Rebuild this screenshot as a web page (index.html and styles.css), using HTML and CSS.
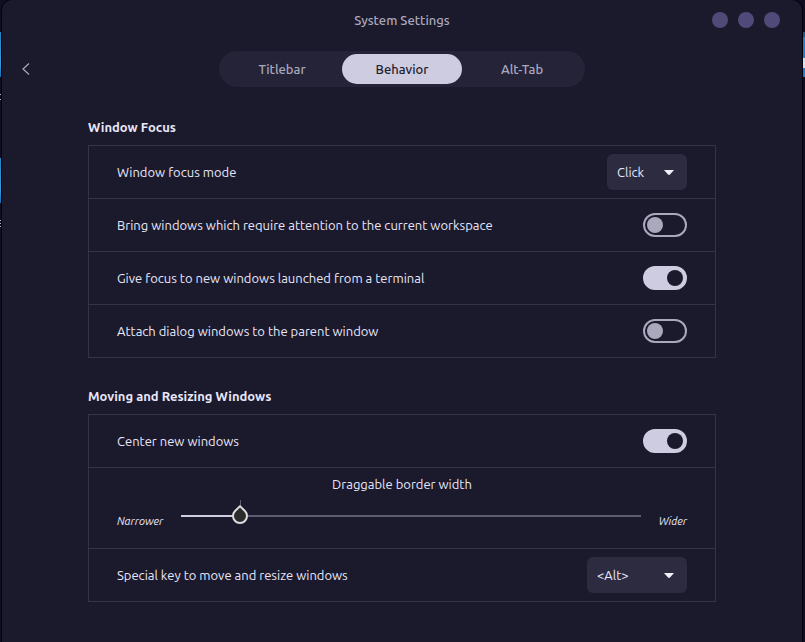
FILE: index.html
```html
<!DOCTYPE html>
<html lang="en">
<head>
<meta charset="utf-8">
<title>System Settings</title>
<link rel="stylesheet" href="styles.css">
</head>
<body>
<div class="window">
  <header class="titlebar">
    <h1>System Settings</h1>
    <div class="window-buttons">
      <button type="button" aria-label="Minimize"></button>
      <button type="button" aria-label="Maximize"></button>
      <button type="button" aria-label="Close"></button>
    </div>
  </header>
  <nav class="toolbar">
    <button type="button" class="back" aria-label="Back">
      <svg width="8" height="12" viewBox="0 0 8 12"><path d="M7 .5 1 6 7 11.5" fill="none" stroke="currentColor" stroke-width="1.2"/></svg>
    </button>
    <div class="tabs">
      <button type="button">Titlebar</button>
      <button type="button" class="active">Behavior</button>
      <button type="button">Alt-Tab</button>
    </div>
  </nav>
  <main>
    <section>
      <h2>Window Focus</h2>
      <div class="group">
        <div class="row">
          <label for="focus-mode">Window focus mode</label>
          <div class="dropdown">
            <select id="focus-mode"><option>Click</option><option>Sloppy</option><option>Mouse</option></select>
            <svg width="10" height="5" viewBox="0 0 10 5"><path d="M0 0h10L6 4.6Q5 5.3 4 4.6z" fill="currentColor"/></svg>
          </div>
        </div>
        <div class="row">
          <label for="attention">Bring windows which require attention to the current workspace</label>
          <input type="checkbox" class="switch" id="attention">
        </div>
        <div class="row">
          <label for="terminal">Give focus to new windows launched from a terminal</label>
          <input type="checkbox" class="switch" id="terminal" checked>
        </div>
        <div class="row">
          <label for="attach">Attach dialog windows to the parent window</label>
          <input type="checkbox" class="switch" id="attach">
        </div>
      </div>
    </section>
    <section>
      <h2>Moving and Resizing Windows</h2>
      <div class="group">
        <div class="row">
          <label for="center">Center new windows</label>
          <input type="checkbox" class="switch" id="center" checked>
        </div>
        <div class="row range-row">
          <label for="border-width">Draggable border width</label>
          <div class="range">
            <span class="range-end">Narrower</span>
            <div class="scale" style="--fill: 12.9%">
              <input type="range" id="border-width" min="2" max="64" value="10">
            </div>
            <span class="range-end">Wider</span>
          </div>
        </div>
        <div class="row">
          <label for="special-key">Special key to move and resize windows</label>
          <div class="dropdown wide">
            <select id="special-key"><option>&lt;Alt&gt;</option><option>&lt;Super&gt;</option><option>Disabled</option></select>
            <svg width="10" height="5" viewBox="0 0 10 5"><path d="M0 0h10L6 4.6Q5 5.3 4 4.6z" fill="currentColor"/></svg>
          </div>
        </div>
      </div>
    </section>
  </main>
</div>
</body>
</html>
```
FILE: styles.css
```css
:root {
  --bg: #1b192c;
  --line: #35334a;
  --text: #e8e7fa;
  --muted: #aaa8bd;
  --accent: #cecce1;
}

* { box-sizing: border-box; }

body {
  margin: 0;
  padding: 0 3px 0 2px;
  background:
    linear-gradient(#2483c6, #3a9be0 70%, #1670b8) 0 32px / 1px 45px no-repeat,
    linear-gradient(#2483c6, #3a9be0 70%, #1670b8) 0 158px / 1px 45px no-repeat,
    linear-gradient(#b9b8c6, #b9b8c6) 0 94px / 1px 1px no-repeat,
    linear-gradient(#b9b8c6, #b9b8c6) 0 99px / 1px 1px no-repeat,
    linear-gradient(#b9b8c6, #b9b8c6) 0 220px / 1px 1px no-repeat,
    linear-gradient(#b9b8c6, #b9b8c6) 0 223px / 1px 1px no-repeat,
    linear-gradient(#b9b8c6, #b9b8c6) 0 226px / 1px 1px no-repeat,
    linear-gradient(#d5e3ec, #d5e3ec) 100% 58px / 2px 10px no-repeat,
    linear-gradient(#175a8e 5px, #2080c8 5px) 100% 32px / 2px 45px no-repeat,
    #100e20;
  color: var(--text);
  font: 13px/20px "Ubuntu", "Noto Sans", sans-serif;
}

button, select, input { margin: 0; font: inherit; }

button {
  border: 0;
  padding: 0;
  background: none;
  color: var(--muted);
}

.window {
  min-height: 100vh;
  border-radius: 10px 10px 0 0;
  background: var(--bg);
  box-shadow: 0 0 0 1px #04030d;
}

.titlebar {
  display: grid;
  grid-template-columns: 1fr auto 1fr;
  align-items: center;
  height: 40px;
  padding: 0 22px;
}

.titlebar h1 {
  grid-column: 2;
  margin: 0;
  color: var(--muted);
  font-size: 13px;
  font-weight: 500;
}

.window-buttons {
  display: flex;
  justify-content: flex-end;
  gap: 10px;
}

.window-buttons button {
  width: 16px;
  height: 16px;
  border-radius: 50%;
  background: #504a78;
}

.toolbar {
  display: grid;
  grid-template-columns: 1fr auto 1fr;
  align-items: center;
  padding: 11px 12px 0;
}

.back {
  display: flex;
  align-items: center;
  justify-content: center;
  width: 24px;
  height: 24px;
}

.tabs {
  display: flex;
  padding: 3px;
  border-radius: 18px;
  background: #252338;
}

.tabs button {
  width: 120px;
  height: 30px;
  border-radius: 15px;
  font-weight: 500;
}

.tabs .active {
  background: var(--accent);
  color: #1f1d30;
}

main {
  display: flex;
  flex-direction: column;
  gap: 28px;
  padding: 30px 86px 40px;
}

h2 {
  margin: 0 0 8px;
  font-size: 13px;
  font-weight: 700;
}

.group { border: 1px solid var(--line); }

.row {
  display: flex;
  align-items: center;
  justify-content: space-between;
  min-height: 52px;
  padding: 0 28px;
}

.row + .row {
  min-height: 53px;
  border-top: 1px solid var(--line);
}

.dropdown {
  position: relative;
  width: 80px;
  height: 36px;
}

.dropdown.wide { width: 100px; }

.dropdown select {
  appearance: none;
  width: 100%;
  height: 100%;
  padding: 0 28px 0 10px;
  border: 0;
  border-radius: 6px;
  background: #2d2b40;
  color: var(--text);
}

.dropdown svg {
  position: absolute;
  top: 16px;
  right: 13px;
  color: #f0effc;
  pointer-events: none;
}

.switch {
  appearance: none;
  flex: none;
  display: flex;
  align-items: center;
  width: 44px;
  height: 24px;
  padding: 0 2px;
  border: 2px solid var(--muted);
  border-radius: 12px;
}

.switch::before {
  content: "";
  width: 16px;
  height: 16px;
  border-radius: 50%;
  background: var(--muted);
}

.switch:checked {
  justify-content: flex-end;
  border-color: var(--accent);
  background: var(--accent);
}

.switch:checked::before { background: var(--bg); }

.range-row {
  flex-direction: column;
  justify-content: flex-start;
  padding-top: 6px;
  padding-bottom: 16px;
}

.range {
  display: flex;
  align-items: flex-end;
  gap: 18px;
  width: 100%;
  height: 38px;
}

.range-end {
  font-size: 11px;
  font-style: italic;
  line-height: 16px;
  padding-bottom: 3px;
}

.scale {
  flex: 1;
  height: 32px;
  background:
    linear-gradient(var(--accent), var(--accent)) 0 15px / var(--fill) 2px no-repeat,
    linear-gradient(#5f5d70, #5f5d70) 0 15px / 100% 2px no-repeat,
    linear-gradient(#5f5d70, #5f5d70) var(--fill) 0 / 1px 8px no-repeat;
}

.scale input {
  appearance: none;
  display: block;
  width: calc(100% + 16px);
  height: 32px;
  margin: 0 -8px;
  background: none;
}

.scale input::-webkit-slider-thumb {
  appearance: none;
  width: 16px;
  height: 16px;
  border: 2px solid #deddde;
  border-radius: 50% 1px 50% 50%;
  background: #2b2b2b;
  transform: rotate(-45deg);
}
```
